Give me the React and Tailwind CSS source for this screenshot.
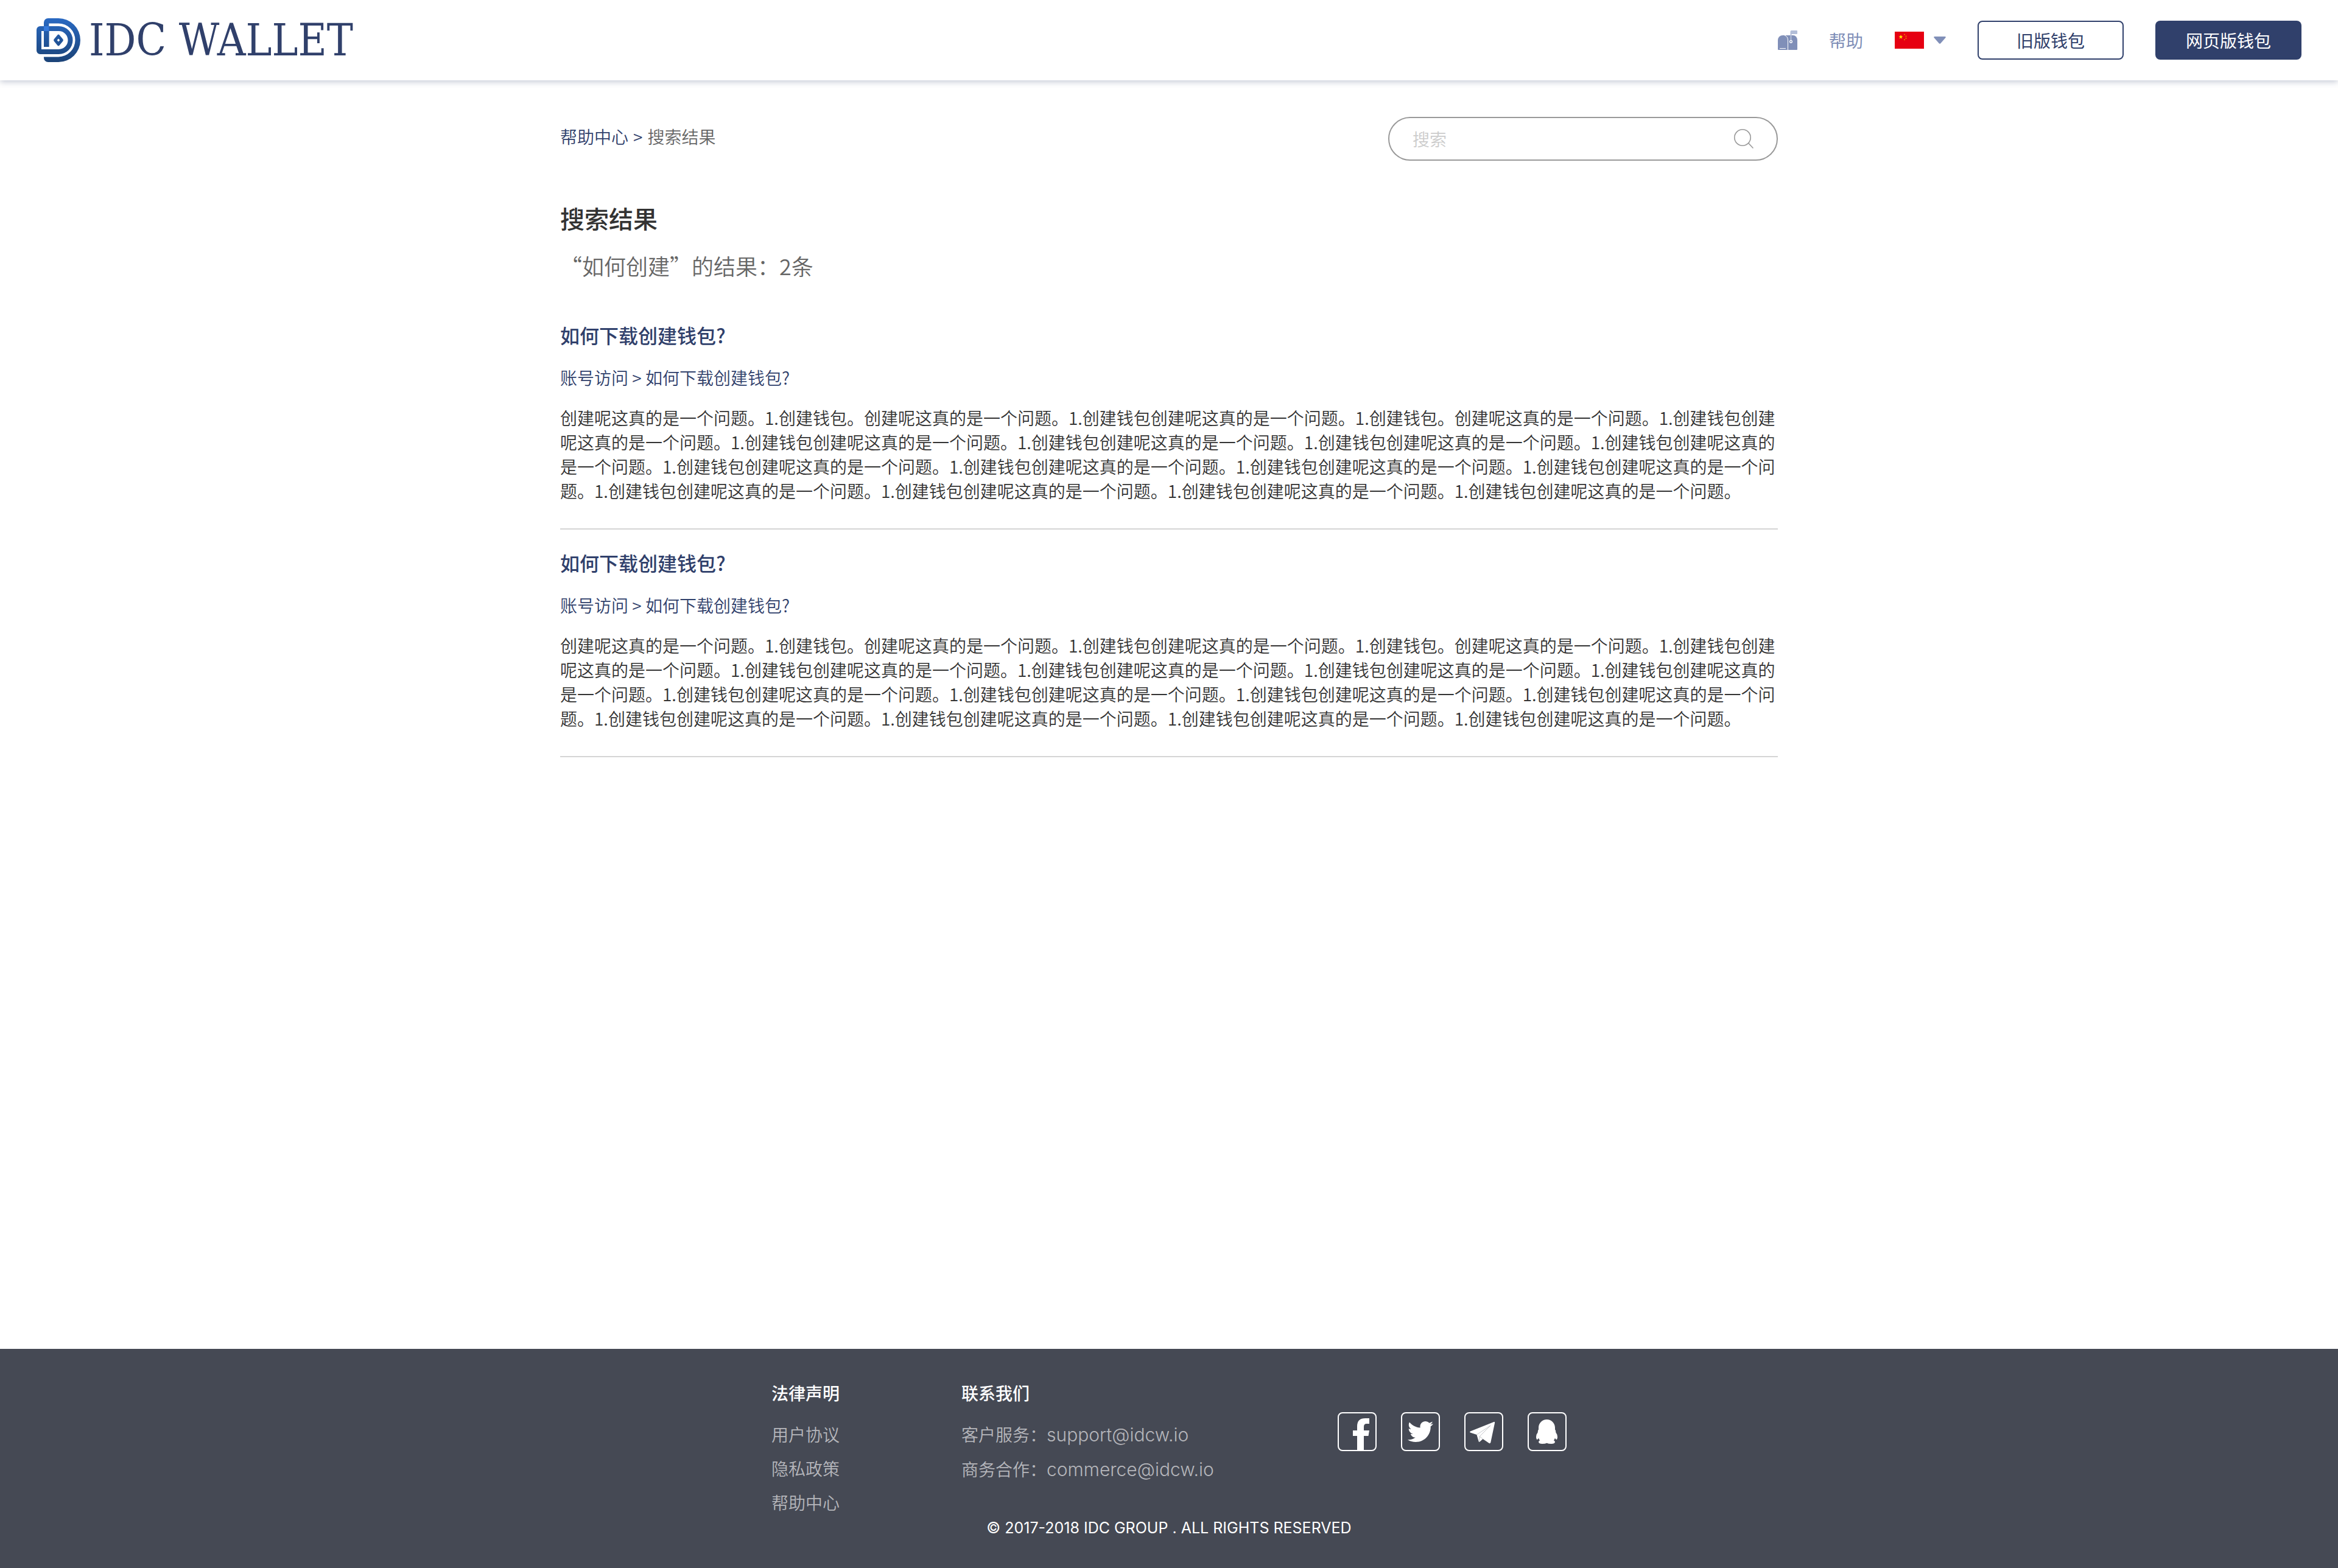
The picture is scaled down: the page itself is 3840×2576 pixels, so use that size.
import { FaTwitter } from "react-icons/fa";

const LONG =
  "创建呢这真的是一个问题。1.创建钱包。创建呢这真的是一个问题。1.创建钱包创建呢这真的是一个问题。1.创建钱包。" +
  "创建呢这真的是一个问题。" +
  "1.创建钱包创建呢这真的是一个问题。".repeat(13);

const results = [
  { id: 1, title: "如何下载创建钱包?", category: "账号访问", body: LONG },
  { id: 2, title: "如何下载创建钱包?", category: "账号访问", body: LONG },
];

function LogoMark() {
  return (
    <svg viewBox="0 0 72 72" className="size-18 shrink-0" aria-hidden="true">
      <defs>
        <linearGradient id="mark" x1="0" y1="0" x2="0" y2="72" gradientUnits="userSpaceOnUse">
          <stop offset="0" stopColor="#2969c2" />
          <stop offset="1" stopColor="#1b4377" />
        </linearGradient>
      </defs>
      <g fill="url(#mark)">
        <path d="M12 7a7 7 0 0 1 7-7H36A36 36 0 0 1 36 72H19a7 7 0 0 1-7-7V63.4H36A27.5 27.5 0 0 0 36 8.4H20.4V47H12Z" />
        <path fillRule="evenodd" d="M6 13H36.5A23 23 0 0 1 36.5 59H6a6 6 0 0 1-6-6V19a6 6 0 0 1 6-6ZM8 21V51H36.5A15 15 0 0 0 36.5 21Z" />
        <path d="M12 20H20.4V47H12Z" />
        <path fillRule="evenodd" d="M34.6 27.2Q36 26 37.4 27.2L43.4 34.6Q44.400 36 43.400 37.400L37.400 44.800Q36 46 34.600 44.800L28.600 37.400Q27.600 36 28.600 34.600ZM36 33.500L33.700 36L36 38.500L38.300 36Z" />
      </g>
      <path d="M12 13H20.4V21H12Z" fill="#3579dc" />
    </svg>
  );
}

function MailboxIcon() {
  return (
    <svg viewBox="0 0 32 32" className="size-8" aria-hidden="true">
      <path d="M0 16a8 8 0 0 1 8-8H25a7 8 0 0 1 7 8V31a1 1 0 0 1-1 1H1a1 1 0 0 1-1-1Z" fill="#808fb8" />
      <path d="M11 8C14.500 9 16.500 12 16.500 16V32" fill="none" stroke="#fff" strokeWidth="1" />
      <path d="M3.500 29.500H12.500" stroke="#fff" strokeWidth="1.200" strokeLinecap="round" />
      <path d="M20.500 2a2 2 0 0 1 2-2H31a1 1 0 0 1 1 1V5a1 1 0 0 1-1 1H22.500V17H20.500Z" fill="#b3bed8" />
      <circle cx="21.500" cy="18.300" r="1.900" fill="#808fb8" stroke="#fff" strokeWidth="1.400" />
    </svg>
  );
}

function ChinaFlag() {
  return (
    <svg viewBox="0 0 48 28" className="h-7 w-12" aria-hidden="true">
      <path d="M0 0H48V28H0Z" fill="#e60012" />
      <path d="M10 4.800L10.900 7.400H13.600L11.400 9L12.200 11.700L10 10.100L7.800 11.700L8.600 9L6.400 7.400H9.100Z" fill="#fff100" />
      <g fill="#f08a00">
        <circle cx="16" cy="4.700" r="1" />
        <circle cx="18.500" cy="7.500" r="1" />
        <circle cx="18.500" cy="10.800" r="1" />
        <circle cx="16" cy="13.300" r="1" />
      </g>
    </svg>
  );
}

function FacebookGlyph() {
  return (
    <svg viewBox="2 2 60 60" className="size-full" aria-hidden="true">
      <path d="M52 10V19H47.500Q43 19 43 24V30H52L50.500 39H43V63H32V39H25V30H32V23Q32 10 45.500 10Z" fill="#fff" />
    </svg>
  );
}

function TelegramGlyph() {
  return (
    <svg viewBox="2 2 60 60" className="size-full" aria-hidden="true">
      <path d="M9.800 31.500L48.600 15.900Q50.400 15.500 50.100 17.400L43.300 49.700Q42.700 51.700 40.800 50.900L30.500 44L25.200 48.800Q24 49.600 23.600 48L20.400 37L9.800 33.500Q8.200 32.500 9.800 31.500Z" fill="#fff" />
      <path d="M20.400 37L43 22L25.200 39.800L30.500 44M25.200 39.800L24.600 48.500" fill="none" stroke="#8d9099" strokeWidth="0.500" />
    </svg>
  );
}

function QqGlyph() {
  return (
    <svg viewBox="2 2 60 60" className="size-full" aria-hidden="true">
      <path
        d="M31.500 12C39 12 45 18 45 25.500V28.500Q46.500 30 46.200 33Q49.300 37 49 41.500Q48.500 45 47.200 45Q46 44.500 45 42.500Q44.200 45 42.800 46.200Q45 47.500 45 49Q44.600 52 39 52Q34 52 31.500 50.800Q29 52 24 52Q18.400 52 18 49Q18 47.500 20.200 46.200Q18.800 45 18 42.500Q17 44.500 15.800 45Q14.500 45 14 41.500Q13.700 37 16.800 33Q16.500 30 18 28.500V25.500C18 18 24 12 31.500 12Z"
        fill="#fff"
      />
    </svg>
  );
}

function Header() {
  return (
    <header className="flex h-[132px] items-center justify-between bg-white px-15 shadow-[0_2px_10px_rgba(48,64,107,0.3)]">
      <a href="#home" className="flex items-center gap-3.5 text-[#30406b]">
        <LogoMark />
        <span className="font-['DejaVu_Serif_Condensed','DejaVu_Serif',serif] text-[72px] leading-none whitespace-nowrap">
          IDC WALLET
        </span>
      </a>
      <nav className="flex items-center gap-13">
        <a href="#messages" aria-label="消息">
          <MailboxIcon />
        </a>
        <a href="#help" className="text-[#808fb8]">
          帮助
        </a>
        <button type="button" aria-label="切换语言" aria-haspopup="listbox" className="flex items-center gap-4">
          <ChinaFlag />
          <svg viewBox="0 0 20 12" className="h-3 w-5" aria-hidden="true">
            <path d="M1.500 0H18.500Q20.500 0.300 19.400 2L11.300 11.200Q10 12.400 8.700 11.200L0.600 2Q-0.500 0.300 1.500 0Z" fill="#808fb8" />
          </svg>
        </button>
        <a
          href="#classic"
          className="flex h-16 w-60 items-center justify-center rounded-lg border-2 border-[#30406b] text-[#30406b]"
        >
          旧版钱包
        </a>
        <a href="#web" className="flex h-16 w-60 items-center justify-center rounded-lg bg-[#30406b] text-white">
          网页版钱包
        </a>
      </nav>
    </header>
  );
}

function SearchBox() {
  return (
    <form
      role="search"
      onSubmit={(e) => e.preventDefault()}
      className="flex h-18 w-160 items-center rounded-full border-2 border-[#999] px-9.5"
    >
      <input
        type="text"
        aria-label="搜索"
        placeholder="搜索"
        className="min-w-0 flex-1 bg-transparent outline-none placeholder:text-[#ccc]"
      />
      <button type="submit" aria-label="提交搜索">
        <svg viewBox="0 0 32 32" className="size-8" fill="none" stroke="#999" strokeWidth="1.600" strokeLinecap="round" aria-hidden="true">
          <circle cx="14" cy="14" r="13.200" />
          <path d="M24 23.500L31 31" />
        </svg>
      </button>
    </form>
  );
}

function Result({ title, category, body }) {
  return (
    <article className="border-b-2 border-[#d5d5d5] pt-7.5 pb-10.5">
      <h2 className="text-[32px] leading-12 font-medium text-[#30406b]">
        <a href="#article">{title}</a>
      </h2>
      <p className="mt-6.5 leading-10 text-[#30406b]">
        <a href="#category">{category}</a> &gt; <a href="#article">{title}</a>
      </p>
      <p className="mt-6.5 leading-10 text-[#333]">{body}</p>
    </article>
  );
}

const socials = [
  { name: "Facebook", icon: <FacebookGlyph /> },
  { name: "Twitter", icon: <FaTwitter className="size-10.5" /> },
  { name: "Telegram", icon: <TelegramGlyph /> },
  { name: "QQ", icon: <QqGlyph /> },
];

function Footer() {
  return (
    <footer className="mt-auto bg-[#454954] pt-11.5 pb-13 text-[#b5b6bb]">
      <div className="flex justify-center">
        <section className="mr-50">
          <h3 className="leading-13 font-medium text-white">法律声明</h3>
          <ul className="mt-3.5 leading-14 font-[350]">
            <li><a href="#terms">用户协议</a></li>
            <li><a href="#privacy">隐私政策</a></li>
            <li><a href="#help">帮助中心</a></li>
          </ul>
        </section>
        <section className="w-[618px]">
          <h3 className="leading-13 font-medium text-white">联系我们</h3>
          <ul className="mt-3.5 leading-14 font-[350]">
            <li>
              客户服务：<a href="mailto:support@idcw.io" className="font-[Inter,sans-serif] text-[30px]">support@idcw.io</a>
            </li>
            <li>
              商务合作：<a href="mailto:commerce@idcw.io" className="font-[Inter,sans-serif] text-[30px]">commerce@idcw.io</a>
            </li>
          </ul>
        </section>
        <ul className="flex gap-10 pt-14.5">
          {socials.map((s) => (
            <li key={s.name}>
              <a
                href={"#" + s.name.toLowerCase()}
                aria-label={s.name}
                className="flex size-16 items-center justify-center overflow-hidden rounded-lg border-2 border-white text-white"
              >
                {s.icon}
              </a>
            </li>
          ))}
        </ul>
      </div>
      <p className="text-center font-[Inter,sans-serif] text-[25px] leading-7 font-normal text-white">
        © 2017-2018 IDC GROUP . ALL RIGHTS RESERVED
      </p>
    </footer>
  );
}

export default function App() {
  return (
    <div
      lang="zh-CN"
      className="flex min-h-screen flex-col bg-white font-['Noto_Sans_CJK_SC',sans-serif] text-[28px] font-normal"
    >
      <Header />
      <main className="mx-auto w-full max-w-[2000px] pt-15 pb-20 font-[350]">
        <div className="flex items-start justify-between">
          <nav aria-label="面包屑" className="flex gap-2 pt-3 leading-10 text-[#666]">
            <a href="#help" className="text-[#30406b]">帮助中心</a>
            <span className="text-[#30406b]">&gt;</span>
            <span>搜索结果</span>
          </nav>
          <SearchBox />
        </div>
        <h1 className="mt-16 text-[40px] leading-15 font-medium text-[#333]">搜索结果</h1>
        <p className="mt-5 text-[36px] leading-14 text-[#666]">“如何创建”的结果：2条</p>
        <div className="mt-8">
          {results.map((r) => (
            <Result key={r.id} {...r} />
          ))}
        </div>
      </main>
      <Footer />
    </div>
  );
}
